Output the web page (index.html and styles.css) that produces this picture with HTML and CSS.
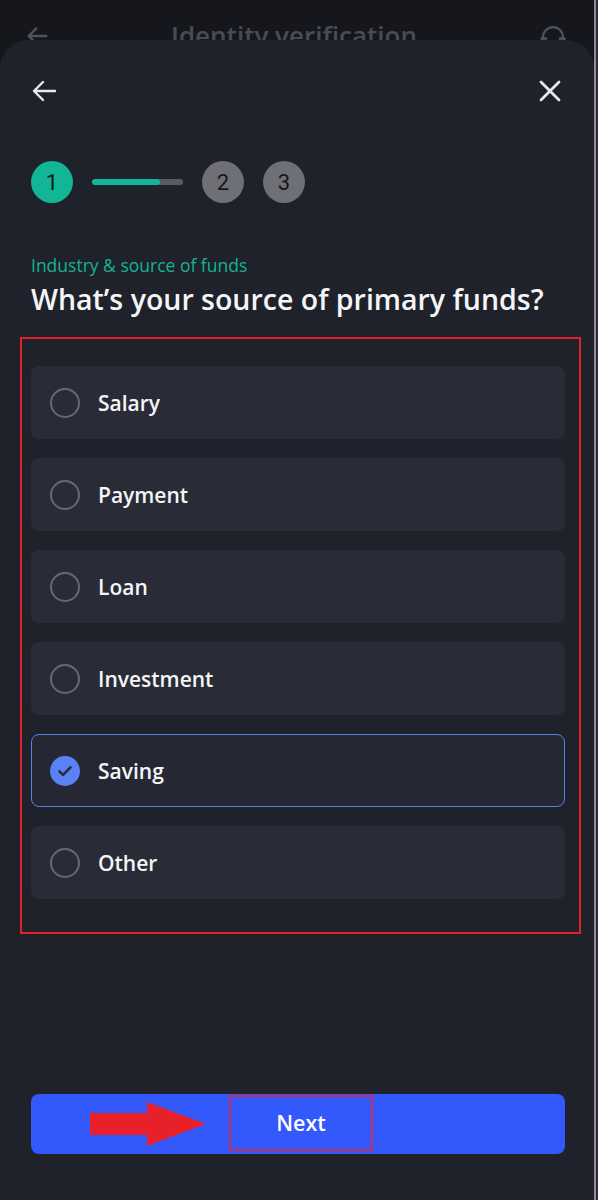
FILE: index.html
```html
<!DOCTYPE html>
<html lang="en">
<head>
<meta charset="utf-8">
<link rel="stylesheet" href="styles.css">
</head>
<body>
<div class="app">
  <header class="behind">
    <svg class="behind-back" width="28" height="28" viewBox="0 0 24 24"><path d="M20 12H5M11 5l-7 7 7 7" fill="none" stroke="#50525a" stroke-width="2"/></svg>
    <span class="behind-title">Identity verification</span>
    <svg class="behind-icon" width="34" height="34" viewBox="0 0 24 24"><path d="M5 16v-4a7 7 0 0 1 14 0v4M4 13h3v6H4zM17 13h3v6h-3z" fill="none" stroke="#50525a" stroke-width="1.6"/></svg>
  </header>
  <main class="sheet">
    <nav class="nav">
      <svg width="26" height="24" viewBox="0 0 26 24"><path d="M24 12H3M12 3l-9 9 9 9" fill="none" stroke="#e8e9ec" stroke-width="2.4" stroke-linecap="round" stroke-linejoin="round"/></svg>
      <svg width="24" height="24" viewBox="0 0 24 24"><path d="M3 3l18 18M21 3L3 21" fill="none" stroke="#e8e9ec" stroke-width="2.8" stroke-linecap="round"/></svg>
    </nav>
    <div class="stepper">
      <span class="step step-active">1</span>
      <span class="bar"><span class="bar-fill" style="width:75%"></span></span>
      <span class="step">2</span>
      <span class="step">3</span>
    </div>
    <p class="eyebrow">Industry &amp; source of funds</p>
    <h1 class="title">What’s your source of primary funds?</h1>
    <div class="highlight">
      <ul class="options">
        <li class="option"><span class="radio"></span><span class="label">Salary</span></li>
        <li class="option"><span class="radio"></span><span class="label">Payment</span></li>
        <li class="option"><span class="radio"></span><span class="label">Loan</span></li>
        <li class="option"><span class="radio"></span><span class="label">Investment</span></li>
        <li class="option option-selected"><span class="radio radio-checked"><svg width="18" height="18" viewBox="0 0 18 18"><path d="M3.5 9.5l3.6 3.4 7.4-7.6" fill="none" stroke="#2a2e3a" stroke-width="2.6" stroke-linecap="round" stroke-linejoin="round"/></svg></span><span class="label">Saving</span></li>
        <li class="option"><span class="radio"></span><span class="label">Other</span></li>
      </ul>
    </div>
    <button class="next">
      <svg class="pointer" width="118" height="44" viewBox="0 0 118 44"><polygon points="0,11 57,11 57,0 116,22 57,44 57,33 0,33" fill="#e8202a"/></svg>
      <span class="next-label">Next</span>
    </button>
  </main>
</div>
</body>
</html>
```

FILE: styles.css
```css
* { box-sizing: border-box; }
html, body { margin: 0; padding: 0; }
body {
  background: #2b2d33;
  font-family: "Open Sans", Roboto, "Noto Sans", "Liberation Sans", sans-serif;
  width: 598px;
  height: 1200px;
  overflow: hidden;
}
.app {
  width: 596px;
  height: 1200px;
  background: #16171d;
  border-right: 2px solid #8d8f94;
  display: flex;
  flex-direction: column;
}
.behind {
  height: 40px;
  overflow: hidden;
  display: flex;
  align-items: flex-start;
  justify-content: space-between;
  padding: 18px 24px 0 24px;
}
.behind-title {
  color: #4a4c53;
  font-size: 26px;
  font-weight: 600;
  line-height: 34px;
}
.behind-back { margin-top: 4px; }
.behind-icon { margin-top: 2px; }
.sheet {
  flex: 1;
  background: #1f222a;
  border-radius: 28px 28px 0 0;
  padding: 39px 29px 46px 31px;
  display: flex;
  flex-direction: column;
}
.nav {
  display: flex;
  justify-content: space-between;
  align-items: center;
  height: 24px;
  padding-right: 3px;
}
.stepper {
  margin-top: 58px;
  display: flex;
  align-items: center;
  height: 42px;
}
.step {
  width: 42px;
  height: 42px;
  border-radius: 50%;
  background: #6f7076;
  color: #16171d;
  display: flex;
  align-items: center;
  justify-content: center;
  font-family: Roboto, "Noto Sans", sans-serif;
  font-size: 22px;
  font-weight: 400;
}
.step + .step { margin-left: 19px; }
.step-active { background: #12b595; }
.bar {
  width: 91px;
  height: 6px;
  border-radius: 3px;
  background: #5a5c63;
  margin: 0 19px;
  overflow: hidden;
  display: flex;
}
.bar-fill {
  background: #12b595;
  border-radius: 3px;
  height: 100%;
}
.eyebrow {
  margin: 51px 0 0 0;
  color: #14b296;
  font-size: 17.5px;
  line-height: 22px;
}
.title {
  margin: 5px 0 0 0;
  color: #f4f5f7;
  font-size: 28.5px;
  font-weight: 600;
  line-height: 36px;
}
.highlight {
  margin: 20px -16px 0 -11px;
  border: 2px solid #e0222d;
  padding: 27px 14px 33px 9px;
}
.options {
  list-style: none;
  margin: 0;
  padding: 0;
  display: flex;
  flex-direction: column;
  gap: 19px;
}
.option {
  height: 73px;
  background: #292c36;
  border-radius: 8px;
  display: flex;
  align-items: center;
  padding-left: 18px;
  border: 1.5px solid transparent;
}
.option-selected {
  background: #252833;
  border-color: #5a7fe6;
}
.radio {
  width: 30px;
  height: 30px;
  border-radius: 50%;
  border: 2px solid #67696f;
  display: flex;
  align-items: center;
  justify-content: center;
  flex: none;
}
.radio-checked {
  background: #5b82f5;
  border-color: #5b82f5;
}
.label {
  margin-left: 18px;
  color: #f4f5f7;
  font-size: 21px;
  font-weight: 600;
}
.next {
  margin-top: auto;
  position: relative;
  height: 60px;
  border: none;
  border-radius: 8px;
  background: #3358fb;
  display: flex;
  align-items: center;
  justify-content: center;
  padding: 0;
  font-family: inherit;
}
.next-label {
  width: 144px;
  height: 56px;
  border: 2px solid #c8305c;
  color: #ffffff;
  font-size: 21.5px;
  font-weight: 600;
  display: flex;
  align-items: center;
  justify-content: center;
  margin-left: 6px;
  margin-top: -3px;
}
.pointer {
  position: absolute;
  left: 59px;
  top: 8px;
}
```
